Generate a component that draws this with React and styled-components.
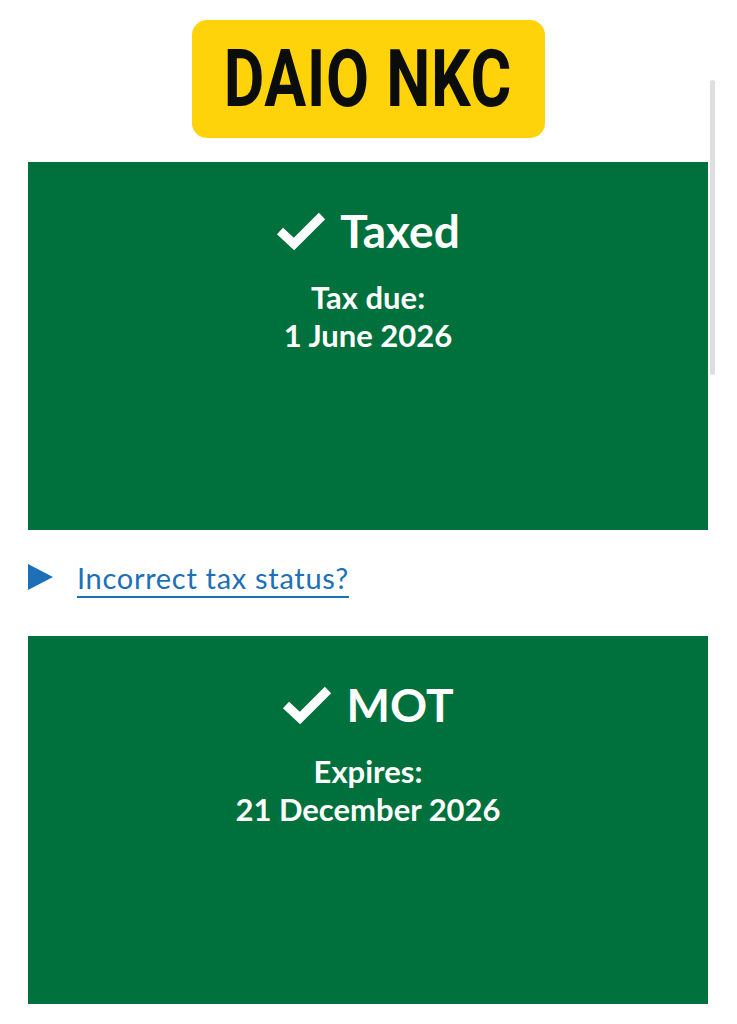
import React from "react";
import styled, { createGlobalStyle } from "styled-components";

const Global = createGlobalStyle`
  html, body { margin: 0; padding: 0; background: #ffffff; }
  body { font-family: "Lato", "Noto Sans", sans-serif; overflow: hidden; }
`;

const Page = styled.div`
  position: relative;
  width: 737px;
  min-height: 1024px;
  box-sizing: border-box;
  padding: 20px 29px 0 28px;
  display: flex;
  flex-direction: column;
`;

const ScrollThumb = styled.div`
  position: absolute;
  left: 710px;
  top: 80px;
  width: 5px;
  height: 295px;
  border-radius: 3px;
  background: #dedede;
`;

const PlateRow = styled.div`
  display: flex;
  justify-content: center;
`;

const Plate = styled.div`
  width: 353px;
  height: 118px;
  border-radius: 15px;
  background: #fed30a;
  display: flex;
  align-items: center;
  justify-content: center;
`;

const PlateText = styled.span`
  display: inline-block;
  font-family: "Roboto", "Liberation Sans", sans-serif;
  font-weight: 700;
  font-size: 80px;
  line-height: 1;
  color: #0b0c0c;
  letter-spacing: 1px;
  transform: scaleX(0.78);
  white-space: nowrap;
`;

const StatusBox = styled.section`
  margin-top: ${(p) => p.$top}px;
  height: 368px;
  box-sizing: border-box;
  background: #00703c;
  color: #ffffff;
  padding-top: 41px;
  display: flex;
  flex-direction: column;
  align-items: center;
  text-align: center;
`;

const Heading = styled.h2`
  margin: 0;
  display: flex;
  align-items: center;
  gap: 14px;
  font-size: 46px;
  font-weight: 700;
  line-height: 55px;
`;

const Detail = styled.p`
  margin: 20px 0 0;
  font-size: 31px;
  font-weight: 700;
  line-height: 38px;
`;

const LinkRow = styled.div`
  display: flex;
  align-items: center;
  gap: 24px;
  margin-top: 27px;
  height: 40px;
`;

const Triangle = styled.span`
  width: 0;
  height: 0;
  border-top: 13px solid transparent;
  border-bottom: 13px solid transparent;
  border-left: 25px solid #1d70b8;
`;

const SummaryLink = styled.a`
  font-size: 29px;
  font-weight: 400;
  letter-spacing: 0.7px;
  color: #1d70b8;
  text-decoration: underline;
  text-decoration-thickness: 2px;
  text-underline-offset: 7px;
  cursor: pointer;
`;

const Tick = () => (
  <svg width="50" height="40" viewBox="0 0 50 40" aria-hidden="true">
    <polyline
      points="4,20 18,33 46,5"
      fill="none"
      stroke="#ffffff"
      strokeWidth="9"
      strokeLinecap="butt"
      strokeLinejoin="miter"
    />
  </svg>
);

export default function App() {
  return (
    <>
      <Global />
      <Page>
        <ScrollThumb />
        <PlateRow>
          <Plate>
            <PlateText>DAIO NKC</PlateText>
          </Plate>
        </PlateRow>
        <StatusBox $top={24}>
          <Heading>
            <Tick />
            Taxed
          </Heading>
          <Detail>
            Tax due:
            <br />1 June 2026
          </Detail>
        </StatusBox>
        <LinkRow>
          <Triangle />
          <SummaryLink>Incorrect tax status?</SummaryLink>
        </LinkRow>
        <StatusBox $top={39}>
          <Heading>
            <Tick />
            MOT
          </Heading>
          <Detail>
            Expires:
            <br />21 December 2026
          </Detail>
        </StatusBox>
      </Page>
    </>
  );
}
